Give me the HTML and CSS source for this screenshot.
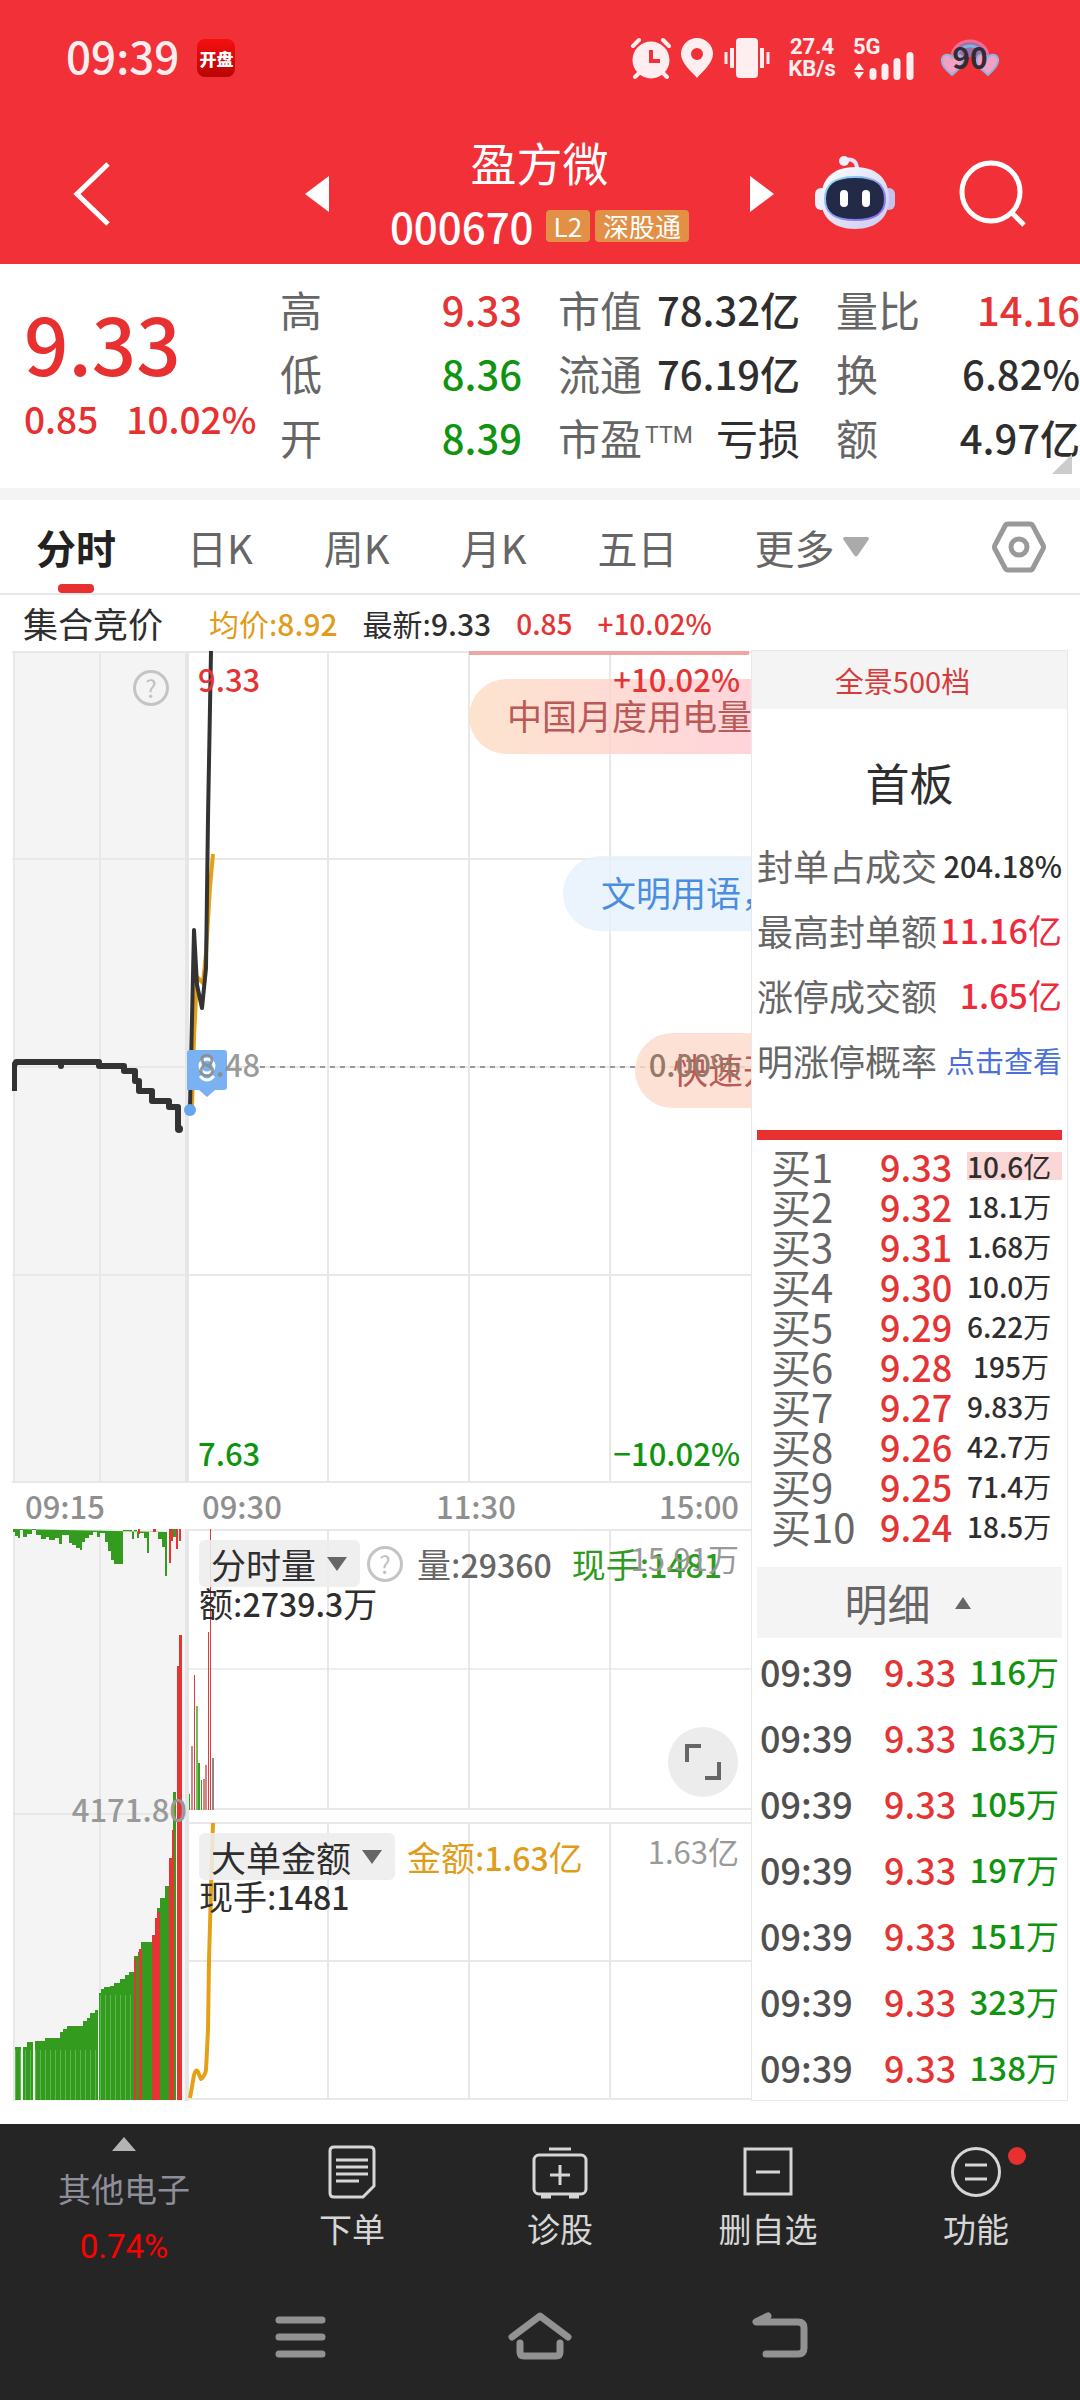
FILE: index.html
```html
<!DOCTYPE html>
<html lang="zh-CN">
<head>
<meta charset="utf-8">
<meta name="viewport" content="width=device-width, initial-scale=1">
<title>盈方微 000670</title>
<link rel="stylesheet" href="styles.css">
</head>
<body>
<header class="top">
  <div class="status">
    <span class="clock">09:39</span>
    <span class="app-badge">开盘</span>
    <span class="spacer"></span>
    <svg class="st-alarm" width="42" height="42" viewBox="0 0 42 42"><circle cx="21" cy="23" r="18.500" fill="#ffeef0"/><path d="M3 9 9 3M33 3l6 6M5 40l6-6M37 40l-6-6" stroke="#ffeef0" stroke-width="4" stroke-linecap="round"/><path d="M21 13v11h9" fill="none" stroke="#f23038" stroke-width="4"/></svg>
    <svg class="st-pin" width="34" height="42" viewBox="0 0 34 42"><path fill="#ffeef0" fill-rule="evenodd" d="M17 1a16 16 0 0 1 16 16c0 9-11 18-16 24C12 35 1 26 1 17A16 16 0 0 1 17 1Zm0 10a6 6 0 1 0 0 12 6 6 0 0 0 0-12Z"/></svg>
    <svg class="st-vib" width="48" height="42" viewBox="0 0 48 42"><rect x="13" y="1" width="22" height="40" rx="4" fill="#ffeef0"/><path d="M9 11v20M39 11v20" stroke="#ffeef0" stroke-width="4"/><path d="M3 15v12M45 15v12" stroke="#ffeef0" stroke-width="3"/></svg>
    <span class="speed"><b>27.4</b><b>KB/s</b></span>
    <span class="signal"><b>5G</b>
      <svg width="62" height="30" viewBox="0 0 62 30"><path fill="#ffeef0" d="M1 20l5-7 5 7zM1 22l5 7 5-7z"/><path d="M20 21.500v5M32 17v9.500M44 11.500v15M57 5.500v21" stroke="#ffeef0" stroke-width="7" stroke-linecap="round"/></svg>
    </span>
    <span class="battery">
      <svg width="60" height="38" viewBox="0 0 60 38"><path d="M12 18a18 16 0 0 1 36 0" fill="#9d6fa8" stroke="#f26c93" stroke-width="3"/><path d="M16 19a14 12 0 0 1 28 0" fill="none" stroke="#7fb3dd" stroke-width="3"/><path d="M12 36C5 30 1 26 2 20c1-5 8-6 10-1 2-5 10-4 11 1s-4 10-11 16ZM48 36c-7-6-12-10-11-16s9-6 11-1c2-5 9-4 10 1s-3 10-10 16Z" fill="#f2a0c4" stroke="#8fb4e0" stroke-width="2"/></svg>
      <b>90</b>
    </span>
  </div>
  <nav class="titlebar" aria-label="股票">
    <button class="icon-btn back" aria-label="返回"><svg width="40" height="66" viewBox="0 0 40 66"><path d="M36 3 5 33l31 30" fill="none" stroke="#fff" stroke-width="5"/></svg></button>
    <button class="icon-btn prev" aria-label="上一只"><svg width="24" height="36" viewBox="0 0 24 36"><path fill="#fff" d="M24 0v36L0 18z"/></svg></button>
    <div class="stock">
      <h1>盈方微</h1>
      <p><span class="code">000670</span><span class="tag">L2</span><span class="tag">深股通</span></p>
    </div>
    <button class="icon-btn next" aria-label="下一只"><svg width="24" height="36" viewBox="0 0 24 36"><path fill="#fff" d="M0 0v36l24-18z"/></svg></button>
    <button class="icon-btn robot" aria-label="智能助手"><svg width="80" height="76" viewBox="0 0 80 76">
      <defs><linearGradient id="shell" x1="0" y1="0" x2="1" y2="1"><stop offset="0" stop-color="#fff"/><stop offset="1" stop-color="#c9c9ef"/></linearGradient><linearGradient id="rim" x1="0" y1="0" x2="1" y2="1"><stop offset="0" stop-color="#8fe6f2"/><stop offset="1" stop-color="#8a5cf0"/></linearGradient></defs>
      <path d="M30 6c8-2 12 2 12 9" fill="none" stroke="#e4e2f6" stroke-width="4"/><circle cx="29" cy="7" r="5" fill="#f1effc"/>
      <rect x="0" y="34" width="12" height="22" rx="6" fill="#eeeefc"/><rect x="68" y="34" width="12" height="22" rx="6" fill="#c4c3ee"/>
      <path d="M40 13c24 0 34 14 34 32S62 75 40 75 6 63 6 45s10-32 34-32Z" fill="url(#shell)"/>
      <path d="M40 23c22 0 30 8 30 22s-9 21-30 21-30-7-30-21 8-22 30-22Z" fill="#222a48" stroke="url(#rim)" stroke-width="2"/>
      <rect x="25" y="36" width="8" height="17" rx="4" fill="#fff"/><rect x="47" y="36" width="8" height="17" rx="4" fill="#fff"/></svg></button>
    <button class="icon-btn search" aria-label="搜索"><svg width="70" height="70" viewBox="0 0 70 70"><circle cx="33" cy="33" r="29" fill="none" stroke="#fff" stroke-width="5"/><path d="m53 53 13 13" stroke="#fff" stroke-width="5"/></svg></button>
  </nav>
</header>

<section class="quote">
  <div class="last">
    <strong>9.33</strong>
    <p><span>0.85</span><span>10.02%</span></p>
  </div>
  <dl>
    <div><dt>高</dt><dd class="up">9.33</dd></div>
    <div><dt>低</dt><dd class="down">8.36</dd></div>
    <div><dt>开</dt><dd class="down">8.39</dd></div>
  </dl>
  <dl>
    <div><dt>市值</dt><dd>78.32亿</dd></div>
    <div><dt>流通</dt><dd>76.19亿</dd></div>
    <div><dt>市盈<sup>TTM</sup></dt><dd class="word">亏损</dd></div>
  </dl>
  <dl>
    <div><dt>量比</dt><dd class="up">14.16</dd></div>
    <div><dt>换</dt><dd>6.82%</dd></div>
    <div><dt>额</dt><dd>4.97亿</dd></div>
  </dl>
  <svg class="corner" width="20" height="20" viewBox="0 0 20 20"><path fill="#ccc" d="M20 0v20H0z"/></svg>
</section>

<nav class="tabs" aria-label="周期">
  <button class="tab active">分时</button>
  <button class="tab">日K</button>
  <button class="tab">周K</button>
  <button class="tab">月K</button>
  <button class="tab">五日</button>
  <button class="tab dropdown">更多<svg width="26" height="20" viewBox="0 0 26 20"><path fill="#aaa" d="M0 2q0-2 2-2h22q2 0 2 2L15 18q-2 3-4 0z"/></svg></button>
  <button class="tab settings" aria-label="设置"><svg width="54" height="52" viewBox="0 0 54 52"><path d="M16 3h22q2 0 3 2l10 19q1 2 0 4L41 47q-1 2-3 2H16q-2 0-3-2L3 28q-1-2 0-4L13 5q1-2 3-2Z" fill="none" stroke="#999" stroke-width="5"/><circle cx="27" cy="26" r="8" fill="none" stroke="#999" stroke-width="5"/></svg></button>
</nav>

<p class="summary">
  <span class="auction">集合竞价</span>
  <span class="avg">均价:<b>8.92</b></span>
  <span>最新:<b>9.33</b></span>
  <b class="change up">0.85</b>
  <b class="change up">+10.02%</b>
</p>

<main class="main">
  <div class="charts">
    <section class="price-chart" aria-label="分时走势">
      <svg class="plot" viewBox="12 650 739 833" preserveAspectRatio="none">
        <path fill="#f4f4f4" d="M13 651h175v831H13z"/>
        <path d="M14 651v832M100 651v832M328 651v832M469 651v832M610 651v832M12 652h739M12 859h739M12 1067h739M12 1275h739M12 1482h739" stroke="#e8e8e8" stroke-width="2" fill="none"/>
        <path d="M187 651v832" stroke="#e6e6e6" stroke-width="4"/>
        <path d="M260 1067h491" stroke="#999" stroke-width="2" stroke-dasharray="5 5"/>
        <path d="M469 653h280" stroke="#f0a5a5" stroke-width="4"/>
        <path d="M192 1108l2-70 3-61 6 6 3-30 4-66 3-33" fill="none" stroke="#e5a116" stroke-width="4" stroke-linejoin="round"/>
        <path d="M190 1108l4-178 3 55 5 23 4-40 2-150 3-167" fill="none" stroke="#333" stroke-width="4" stroke-linejoin="round"/>
        <path d="M14 1091v-25l2-4h45v4v-4h38v4h25v5h11v10h4v10h13v10h17v6h9v23" fill="none" stroke="#333" stroke-width="6" stroke-linejoin="round"/>
        <circle cx="179" cy="1129" r="4" fill="#333"/>
        <path d="M187 1053q0-3 3-3h34q3 0 3 3v34q0 3-3 3h-9l-8 7-8-7h-12z" fill="#7ab1f3"/>
        <path d="M200 1076q7 8 14 0" fill="none" stroke="#fff" stroke-width="3"/><circle cx="207" cy="1066" r="7" fill="none" stroke="#fff" stroke-width="3"/>
        <circle cx="190" cy="1110" r="6" fill="#66a5ef"/>
      </svg>
      <span class="bubble bubble-1">中国月度用电量</span>
      <span class="bubble bubble-2">文明用语，</span>
      <span class="bubble bubble-3">快速开</span>
      <button class="help help-auction" aria-label="说明">?</button>
      <span class="mark mark-tl up">9.33</span>
      <span class="mark mark-tr up">+10.02%</span>
      <span class="mark mark-ml">8.48</span>
      <span class="mark mark-mr">0.00%</span>
      <span class="mark mark-bl down">7.63</span>
      <span class="mark mark-br down">−10.02%</span>
    </section>
    <div class="axis"><span>09:15</span><span>09:30</span><span>11:30</span><span>15:00</span></div>
    <section class="volume-chart" aria-label="成交量">
      <svg class="plot" viewBox="12 1529 739 572" preserveAspectRatio="none">
        <defs><pattern id="stripe" width="5" height="20" patternUnits="userSpaceOnUse"><path fill="#5cb84c" d="M0 0h1v20H0z"/></pattern></defs>
        <path fill="#f4f4f4" d="M13 1529h175v572H13z"/>
        <path d="M14 1529v572M100 1529v572M328 1529v281M469 1529v281M610 1529v281M328 1823v277M469 1823v277M610 1823v277M188 1530h563M188 1809h563M188 1823h563M188 1961h563M188 2099h563" stroke="#e8e8e8" stroke-width="2" fill="none"/>
        <path d="M187 1529v572" stroke="#e6e6e6" stroke-width="4"/>
        <path d="M14 1814h173M188 1669h563" stroke="#ddd" stroke-width="1"/>
        <path id="hang" fill="#339c1f" d="M13 1529v3h2v4h3v2h2v-9h3v8h4v-3h5v-5h4v6h5v4h5v-2h3v3h6v-2h4v6h3v-9h7v8h3v2h4v3h4v2h2v-8h3v-4h4v-3h4v-3h4v5h3v-4h5v9h3v9h3v9h3v4h9v-34h9v9h2v-9h3v8h2v-5h5v5h3v15h2v-21h9v7h4v8h3v29h2v-44z"/>
        <path fill="#e43434" d="M138 1529h2v5h-2zM153 1529h3v3h-3zM169 1529h2v34h-2zM171 1529h2v12h-2zM176 1529h2v20h-2zM179 1529h2v12h-2z"/>
        <path fill="#339c1f" d="M173 1529h3v8h-3z"/>
        <path id="climb" fill="#339c1f" d="M15 2100v-53h6v53zM23 2100v-53h4v-5h6v58zM35 2100v-59h10v-3h15v-6h3v-3h4v-3h16v-5h4v-3h3v-5h5v-3h3v90zM99 2100v-107h2v-4h3v-2h6v-1h4v-3h6v-4h5v-4h4v-3h5v-16h4v-4h3v-10h16v-34h3v-10h5v-12h4v-28h4v-66h3v308z"/>
        <path fill="url(#stripe)" d="M15 2050h84v50H15zM99 1995h35v105H99z"/>
        <path fill="#e43434" d="M134 1959h2v141h-2zM139 1949h3v151h-3zM152 1935h3v165h-3zM155 1918h2v182h-2zM157 1912h3v188h-3zM169 1858h3v242h-3zM172 1830h2v270h-2zM177 1666h2v434h-2zM179 1635h3v465h-3z"/>
        <path fill="#35a01f" d="M189 1794h1v16h-1zM198 1763h2v47h-2zM201 1780h1v30h-1z"/>
        <path fill="#6cbf5c" d="M196 1706h2v104h-2z"/>
        <path fill="#d98284" d="M191 1746h2v64h-2zM203 1779h2v31h-2zM205 1765h2v45h-2z"/>
        <path fill="#dd3b3b" d="M194 1675h1v135h-1zM208 1632h1v178h-1zM210 1529h1v281h-1z"/>
        <path fill="#888" d="M212 1758h2v52h-2z"/>
        <path d="M190 2098l4-23q2-7 4-3l3 7q4-3 5-9l2-40 1-70 2-70 2-67" fill="none" stroke="#e5a116" stroke-width="4" stroke-linejoin="round"/>
      </svg>
      <span class="mark auction-volume">4171.80</span>
      <div class="legend legend-volume">
        <span class="mark max">15.91万</span>
        <p><button class="picker">分时量<svg width="20" height="14" viewBox="0 0 20 14"><path fill="#666" d="M0 0h20L10 14z"/></svg></button><button class="help" aria-label="说明">?</button><span class="muted">量:<b>29360</b></span><span class="hand">现手:<b>1481</b></span></p>
        <p>额:<b>2739.3</b>万</p>
      </div>
      <div class="legend legend-orders">
        <span class="mark max">1.63亿</span>
        <p><button class="picker">大单金额<svg width="20" height="14" viewBox="0 0 20 14"><path fill="#666" d="M0 0h20L10 14z"/></svg></button><span class="avg">金额:<b>1.63</b>亿</span></p>
        <p>现手:<b>1481</b></p>
      </div>
      <button class="expand" aria-label="全屏"><svg width="36" height="36" viewBox="0 0 36 36"><path d="M2 18V2h14M34 18v16H20" fill="none" stroke="#666" stroke-width="4"/></svg></button>
    </section>
  </div>

  <aside class="side">
    <a class="depth-link" href="#depth">全景500档</a>
    <h2>首板</h2>
    <dl class="board">
      <div><dt>封单占成交</dt><dd class="pct">204.18%</dd></div>
      <div><dt>最高封单额</dt><dd class="amount"><b>11.16</b>亿</dd></div>
      <div><dt>涨停成交额</dt><dd class="amount"><b>1.65</b>亿</dd></div>
      <div><dt>明涨停概率</dt><dd><a href="#odds">点击查看</a></dd></div>
    </dl>
    <div class="ratio"></div>
    <table class="bids">
      <tr><th>买1</th><td>9.33</td><td><span class="hot"><b>10.6</b>亿</span></td></tr>
      <tr><th>买2</th><td>9.32</td><td><span><b>18.1</b>万</span></td></tr>
      <tr><th>买3</th><td>9.31</td><td><span><b>1.68</b>万</span></td></tr>
      <tr><th>买4</th><td>9.30</td><td><span><b>10.0</b>万</span></td></tr>
      <tr><th>买5</th><td>9.29</td><td><span><b>6.22</b>万</span></td></tr>
      <tr><th>买6</th><td>9.28</td><td><span><b>195</b>万</span></td></tr>
      <tr><th>买7</th><td>9.27</td><td><span><b>9.83</b>万</span></td></tr>
      <tr><th>买8</th><td>9.26</td><td><span><b>42.7</b>万</span></td></tr>
      <tr><th>买9</th><td>9.25</td><td><span><b>71.4</b>万</span></td></tr>
      <tr><th>买10</th><td>9.24</td><td><span><b>18.5</b>万</span></td></tr>
    </table>
    <button class="detail">明细<svg width="16" height="12" viewBox="0 0 16 12"><path fill="#666" d="M0 12h16L8 0z"/></svg></button>
    <table class="ticks">
      <tr><td>09:39</td><td>9.33</td><td><b>116</b>万</td></tr>
      <tr><td>09:39</td><td>9.33</td><td><b>163</b>万</td></tr>
      <tr><td>09:39</td><td>9.33</td><td><b>105</b>万</td></tr>
      <tr><td>09:39</td><td>9.33</td><td><b>197</b>万</td></tr>
      <tr><td>09:39</td><td>9.33</td><td><b>151</b>万</td></tr>
      <tr><td>09:39</td><td>9.33</td><td><b>323</b>万</td></tr>
      <tr><td>09:39</td><td>9.33</td><td><b>138</b>万</td></tr>
    </table>
  </aside>
</main>

<footer class="bottom">
  <nav class="actions" aria-label="操作">
    <button class="sector"><svg width="24" height="14" viewBox="0 0 24 14"><path fill="#b4b4b4" d="M0 14h24L12 0z"/></svg><span>其他电子</span><em>0.74%</em></button>
    <button class="action"><svg width="56" height="56" viewBox="0 0 56 56" fill="none" stroke="#d6d6d6" stroke-width="3"><path d="M10 3h36q4 0 4 4v35L39 53H10q-4 0-4-4V7q0-4 4-4Z"/><path d="M12 16h32M12 23h32M12 30h32M12 37h23"/></svg>下单</button>
    <button class="action"><svg width="56" height="56" viewBox="0 0 56 56" fill="none" stroke="#d6d6d6" stroke-width="3"><rect x="2" y="11" width="52" height="39" rx="5"/><path d="M17 5h22M28 21v20M18 31h20"/><path d="M9 52.500h10M37 52.500h10" stroke-width="4"/></svg>诊股</button>
    <button class="action"><svg width="56" height="56" viewBox="0 0 56 56" fill="none" stroke="#d6d6d6" stroke-width="3"><rect x="5" y="5" width="46" height="45"/><path d="M16 28h24"/></svg>删自选</button>
    <button class="action more"><svg width="56" height="56" viewBox="0 0 56 56" fill="none" stroke="#d6d6d6" stroke-width="3"><circle cx="28" cy="28" r="23.500"/><path d="M17 21h22M17 35h22"/></svg>功能</button>
  </nav>
  <nav class="system" aria-label="系统导航">
    <button aria-label="任务"><svg width="64" height="50" viewBox="0 0 64 50"><path d="M11 8h43M11 25h43M11 42h43" stroke="#929292" stroke-width="7" stroke-linecap="round"/></svg></button>
    <button aria-label="主页"><svg width="64" height="50" viewBox="0 0 64 50" fill="none" stroke="#929292" stroke-width="7" stroke-linecap="round" stroke-linejoin="round"><path d="M4 25 32 4l28 21M12 31v9q0 4 4 4h32q4 0 4-4v-9"/></svg></button>
    <button aria-label="后退"><svg width="64" height="50" viewBox="0 0 64 50" fill="none" stroke="#929292" stroke-width="7" stroke-linecap="round" stroke-linejoin="round"><path d="M20 4 8 10h42q6 0 6 6v20q0 6-6 6H18"/></svg></button>
  </nav>
</footer>
</body>
</html>
```
FILE: styles.css
```css
:root {
  --up: #e43434;
  --down: #109410;
  --ink: #2e2e2e;
  --muted: #666;
  --pale: #999;
}
* { box-sizing: border-box; }
body {
  margin: 0;
  background: #fff;
  color: var(--ink);
  font-family: "Noto Sans CJK SC", "Noto Sans", sans-serif;
  font-size: 32px;
  line-height: 1;
  overflow-x: hidden;
}
p, h1, h2, dl, dd { margin: 0; }
h1, h2 { font-weight: 400; }
b { font-weight: 500; }
svg { display: block; flex: none; }
button {
  margin: 0;
  padding: 0;
  border: 0;
  background: none;
  color: inherit;
  font: inherit;
}
a { text-decoration: none; }
.up { color: var(--up); }
.down { color: var(--down); }
.muted { color: var(--muted); }
.avg { color: #e09c1a; }
.spacer { flex: 1; }

/* header */
.top { background: #f23038; color: #fff; }
.status {
  display: flex;
  align-items: center;
  height: 116px;
  padding: 0 80px 0 66px;
  color: #ffeef0;
}
.clock { padding-bottom: 6px; font-size: 44px; font-weight: 500; line-height: 56px; }
.app-badge {
  display: grid;
  place-items: center;
  width: 38px;
  height: 38px;
  margin-left: 18px;
  border-radius: 8px;
  background: linear-gradient(#f60f0f, #b80505);
  color: #fff;
  font-size: 17px;
  font-weight: 900;
}
.st-pin { margin-left: 8px; }
.st-vib { margin-left: 9px; }
.speed, .signal {
  display: flex;
  flex-direction: column;
  align-items: center;
  width: 50px;
  margin-left: 16px;
  font-size: 22px;
  line-height: 22px;
}
.speed b, .signal b { font-family: Roboto, sans-serif; font-weight: 700; }
.signal { align-items: flex-start; width: 62px; margin-left: 16px; }
.signal svg { margin-top: -8px; }
.battery { display: grid; place-items: center; margin-left: 25px; }
.battery svg, .battery b { grid-area: 1 / 1; }
.battery b { padding-bottom: 4px; color: #332a33; font-size: 30px; font-weight: 700; }

.titlebar { display: flex; align-items: center; height: 148px; padding: 8px 52px 0 72px; }
.prev { margin-left: 193px; }
.stock { flex: 1; text-align: center; }
.stock h1 { font-size: 46px; line-height: 64px; }
.stock p { display: flex; align-items: center; justify-content: center; gap: 5px; height: 66px; }
.code { margin-right: 7px; font-size: 42px; font-weight: 500; }
.tag { padding: 0 8px; border-radius: 4px; background: #e39047; font-size: 26px; line-height: 32px; }
.robot { margin: 0 0 4px 41px; }
.search { margin-left: 63px; }

/* quote */
.quote {
  position: relative;
  display: grid;
  grid-template-columns: minmax(0, 220fr) minmax(0, 242fr) minmax(0, 242fr) minmax(0, 244fr);
  gap: 36px;
  height: 236px;
  padding: 12px 0 0 24px;
  border-bottom: 12px solid #f4f4f4;
}
.last { color: #e83030; white-space: nowrap; font-weight: 500; }
.last strong { display: block; padding-top: 24px; font-size: 78px; font-weight: 500; line-height: 84px; }
.last p { display: flex; gap: 28px; font-size: 37px; line-height: 48px; padding-top: 10px; }
.quote dl { padding-top: 1px; }
.quote dl div { display: flex; justify-content: space-between; height: 64px; line-height: 64px; }
.quote dt { color: var(--muted); font-size: 42px; }
.quote dd { font-size: 40px; font-weight: 500; }
.quote .word { font-size: 42px; font-weight: 400; }
.quote sup { font-family: Roboto, sans-serif; font-size: 23px; line-height: 1; vertical-align: 12px; margin-left: 3px; }
.corner { position: absolute; right: 8px; bottom: 14px; }

/* tabs */
.tabs {
  display: flex;
  gap: 71px;
  height: 95px;
  padding: 0 34px 0 36px;
  border-bottom: 2px solid #e8e8e8;
}
.tab { position: relative; display: flex; align-items: center; color: var(--muted); font-size: 40px; }
.tab.active { color: #222; font-weight: 700; }
.tab.active::after {
  content: "";
  position: absolute;
  left: 22px;
  bottom: 0;
  width: 36px;
  height: 9px;
  border-radius: 4px;
  background: #e83030;
}
.dropdown { gap: 8px; padding-left: 6px; }
.settings { margin-left: auto; }

.summary {
  display: flex;
  align-items: center;
  gap: 25px;
  height: 55px;
  padding-left: 23px;
  font-size: 30px;
}
.auction { margin-right: 21px; font-size: 35px; }
.change { font-size: 28px; }

/* charts */
.main { display: grid; grid-template-columns: 739fr 317fr; padding: 0 12px; align-items: start; }
.charts { min-width: 0; }
.price-chart, .volume-chart { position: relative; overflow: hidden; }
.price-chart { height: 833px; }
.volume-chart { height: 572px; }
.plot { width: 100%; height: 100%; }
.mark { position: absolute; font-size: 31px; font-weight: 500; line-height: 36px; white-space: nowrap; }
.mark-tl { left: 186px; top: 11px; }
.mark-tr { right: 11px; top: 11px; }
.mark-ml, .mark-mr { top: 396px; color: #8c8c8ce0; }
.mark-ml { left: 186px; }
.mark-mr { right: 11px; color: #957a68; }
.mark-bl, .mark-br { bottom: 12px; }
.mark-bl { left: 186px; }
.mark-br { right: 11px; }
.help {
  flex: none;
  width: 36px;
  height: 36px;
  border: 3px solid #c4c4c4;
  border-radius: 50%;
  color: #c0c0c0;
  font-size: 24px;
  line-height: 28px;
}
.help-auction { position: absolute; left: 121px; top: 20px; }
.bubble {
  position: absolute;
  right: 0;
  height: 75px;
  padding-left: 38px;
  overflow: hidden;
  border-radius: 38px 0 0 38px;
  background: linear-gradient(90deg, #fddcc2cc, #ffcad2cc);
  color: #b95a58;
  font-size: 35px;
  line-height: 72px;
  white-space: nowrap;
}
.bubble-1 { top: 29px; width: 282px; }
.bubble-2 { top: 206px; width: 188px; background: #e6f0fdcc; color: #4a8fdf; }
.bubble-3 { top: 383px; width: 116px; background: #fddaccd0; }

.axis {
  display: grid;
  grid-template-columns: 177fr 234fr 159fr 144fr;
  height: 46px;
  padding: 0 12px 0 13px;
  color: #8f8f8f;
  font-size: 31px;
  font-weight: 500;
  line-height: 46px;
}
.axis span:last-child { text-align: right; }

.auction-volume { right: 564px; top: 262px; color: var(--pale); }
.legend { position: absolute; left: 187px; right: 12px; font-size: 34px; }
.legend-volume { top: 11px; }
.legend-orders { top: 304px; }
.legend p { display: flex; align-items: center; line-height: 32px; }
.legend b { font-size: 32px; }
.picker {
  display: flex;
  align-items: center;
  gap: 11px;
  height: 47px;
  padding: 0 13px 0 12px;
  border-radius: 6px;
  background: #ededede0;
  font-size: 35px;
}
.legend .help { margin-left: 7px; }
.legend .muted { margin-left: 14px; }
.legend .hand { margin-left: 20px; color: #2f9a1f; }
.legend .avg { margin-left: 12px; }
.max { right: 0; top: 0; color: var(--pale); font-weight: 400; }
.expand {
  position: absolute;
  right: 13px;
  top: 198px;
  display: grid;
  place-items: center;
  width: 70px;
  height: 70px;
  border-radius: 50%;
  background: #ececec;
}

/* side panel */
.side { border: 1px solid #e8e8e8; padding: 0 5px; min-width: 0; }
.depth-link {
  display: block;
  margin: 0 -5px;
  padding-right: 14px;
  background: #f4f4f4;
  color: #d83a3a;
  font-size: 29px;
  line-height: 58px;
  text-align: center;
}
.side h2 { padding-top: 22px; font-size: 44px; line-height: 102px; text-align: center; }
.board div { display: flex; justify-content: space-between; height: 65px; line-height: 64px; white-space: nowrap; }
.board dt { color: var(--muted); font-size: 36px; }
.board dd { font-size: 29px; }
.board .pct { font-weight: 500; }
.board .amount { color: #ee2a3c; font-size: 34px; }
.board a { color: #4a6fd8; }
.ratio { height: 10px; margin-top: 37px; background: #e83030; }
table { width: 100%; border-collapse: collapse; table-layout: fixed; white-space: nowrap; }
th, td { padding: 0; font-weight: 400; text-align: left; }
.bids { margin-top: 6px; }
.bids tr { height: 40px; line-height: 40px; }
.bids th { width: 123px; padding-left: 14px; color: var(--muted); font-size: 40px; }
.bids td:nth-child(2) { width: 87px; color: var(--up); font-size: 36px; font-weight: 500; }
.bids span { display: block; padding-right: 13px; font-size: 28px; line-height: 28px; text-align: right; }
.bids .hot { background: #fad6d6; }
.detail {
  display: flex;
  align-items: center;
  justify-content: center;
  gap: 24px;
  width: 100%;
  height: 71px;
  margin-top: 21px;
  padding-right: 4px;
  background: #f4f4f4;
  color: var(--muted);
  font-size: 43px;
}
.ticks td { height: 66px; font-size: 36px; font-weight: 500; line-height: 62px; }
.ticks td:first-child { width: 127px; padding-left: 3px; color: #505050; }
.ticks td:nth-child(2) { color: var(--up); width: 80px; }
.ticks td:last-child { padding-right: 3px; color: var(--down); font-size: 33px; font-weight: 400; text-align: right; }

/* bottom */
.bottom { margin-top: 23px; background: #252525; color: #d6d6d6; }
.actions { display: grid; grid-template-columns: 248fr 208fr 208fr 208fr 208fr; height: 152px; font-size: 33px; }
.actions button { display: flex; flex-direction: column; align-items: center; }
.sector { padding-top: 13px; color: #8e8e9a; }
.sector span { padding-top: 20px; line-height: 34px; }
.sector em { padding-top: 25px; color: #f00; font-family: Roboto, sans-serif; font-style: normal; line-height: 34px; }
.action { position: relative; padding-top: 20px; gap: 11px; line-height: 34px; }
.more::after {
  content: "";
  position: absolute;
  left: 136px;
  top: 23px;
  width: 18px;
  height: 18px;
  border-radius: 50%;
  background: #e83030;
}
.system { display: flex; justify-content: center; gap: 176px; height: 124px; padding-top: 36px; align-items: flex-start; }
```
